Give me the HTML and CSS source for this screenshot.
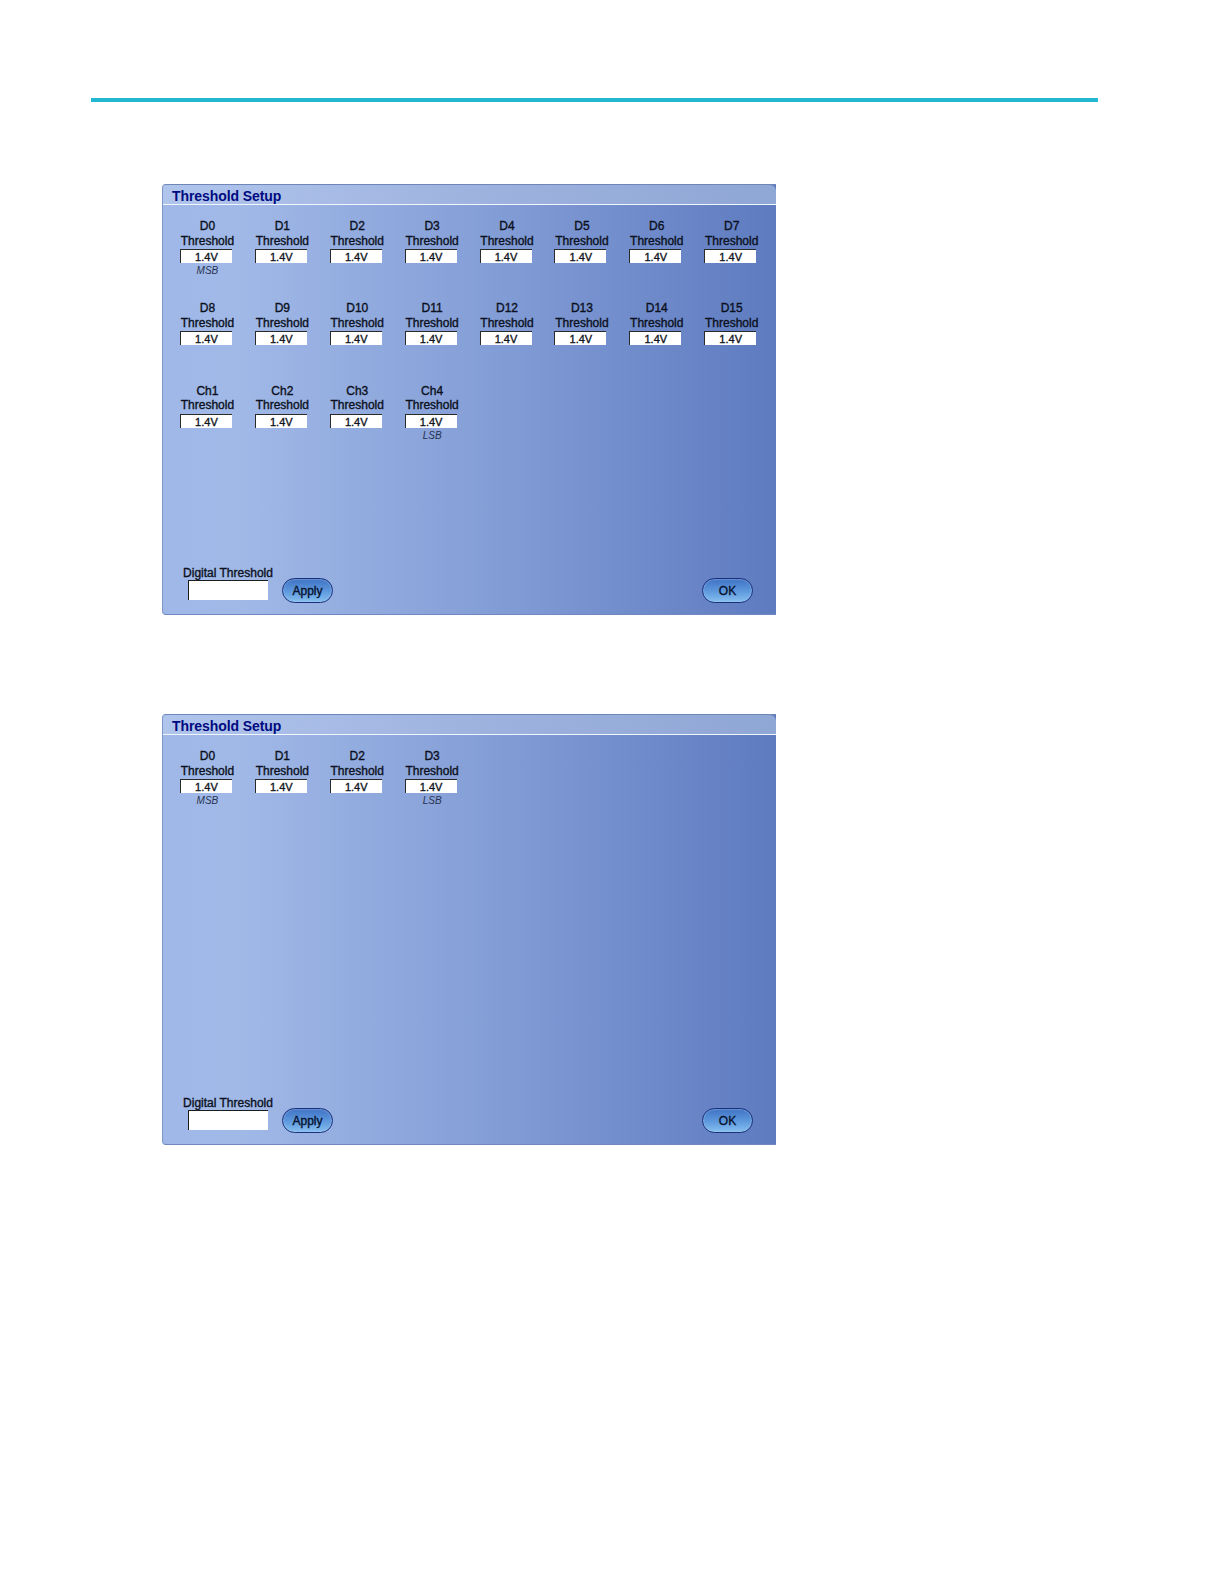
FILE: index.html
```html
<!DOCTYPE html>
<html lang="en">
<head>
<meta charset="utf-8">
<title>Threshold Setup</title>
<link rel="stylesheet" href="styles.css">
</head>
<body>
<div class="rule"></div>
<main class="stack">
  <section class="panel">
    <h2 class="title">Threshold Setup</h2>
    <div class="grid">
      <div class="cell"><span class="name">D0</span><span class="name">Threshold</span><span class="box">1.4V</span><span class="note">MSB</span></div>
      <div class="cell"><span class="name">D1</span><span class="name">Threshold</span><span class="box">1.4V</span></div>
      <div class="cell"><span class="name">D2</span><span class="name">Threshold</span><span class="box">1.4V</span></div>
      <div class="cell"><span class="name">D3</span><span class="name">Threshold</span><span class="box">1.4V</span></div>
      <div class="cell"><span class="name">D4</span><span class="name">Threshold</span><span class="box">1.4V</span></div>
      <div class="cell"><span class="name">D5</span><span class="name">Threshold</span><span class="box">1.4V</span></div>
      <div class="cell"><span class="name">D6</span><span class="name">Threshold</span><span class="box">1.4V</span></div>
      <div class="cell"><span class="name">D7</span><span class="name">Threshold</span><span class="box">1.4V</span></div>
      <div class="cell"><span class="name">D8</span><span class="name">Threshold</span><span class="box">1.4V</span></div>
      <div class="cell"><span class="name">D9</span><span class="name">Threshold</span><span class="box">1.4V</span></div>
      <div class="cell"><span class="name">D10</span><span class="name">Threshold</span><span class="box">1.4V</span></div>
      <div class="cell"><span class="name">D11</span><span class="name">Threshold</span><span class="box">1.4V</span></div>
      <div class="cell"><span class="name">D12</span><span class="name">Threshold</span><span class="box">1.4V</span></div>
      <div class="cell"><span class="name">D13</span><span class="name">Threshold</span><span class="box">1.4V</span></div>
      <div class="cell"><span class="name">D14</span><span class="name">Threshold</span><span class="box">1.4V</span></div>
      <div class="cell"><span class="name">D15</span><span class="name">Threshold</span><span class="box">1.4V</span></div>
      <div class="cell"><span class="name">Ch1</span><span class="name">Threshold</span><span class="box">1.4V</span></div>
      <div class="cell"><span class="name">Ch2</span><span class="name">Threshold</span><span class="box">1.4V</span></div>
      <div class="cell"><span class="name">Ch3</span><span class="name">Threshold</span><span class="box">1.4V</span></div>
      <div class="cell"><span class="name">Ch4</span><span class="name">Threshold</span><span class="box">1.4V</span><span class="note">LSB</span></div>
    </div>
    <div class="footer">
      <div class="digital"><span class="digital-label">Digital Threshold</span><span class="digital-box"></span></div>
      <span class="btn btn-apply">Apply</span>
      <span class="btn btn-ok">OK</span>
    </div>
  </section>
  <section class="panel">
    <h2 class="title">Threshold Setup</h2>
    <div class="grid">
      <div class="cell"><span class="name">D0</span><span class="name">Threshold</span><span class="box">1.4V</span><span class="note">MSB</span></div>
      <div class="cell"><span class="name">D1</span><span class="name">Threshold</span><span class="box">1.4V</span></div>
      <div class="cell"><span class="name">D2</span><span class="name">Threshold</span><span class="box">1.4V</span></div>
      <div class="cell"><span class="name">D3</span><span class="name">Threshold</span><span class="box">1.4V</span><span class="note">LSB</span></div>
    </div>
    <div class="footer">
      <div class="digital"><span class="digital-label">Digital Threshold</span><span class="digital-box"></span></div>
      <span class="btn btn-apply">Apply</span>
      <span class="btn btn-ok">OK</span>
    </div>
  </section>
</main>
</body>
</html>
```
FILE: styles.css
```css
* { box-sizing: border-box; }
html, body { margin: 0; padding: 0; background: #fff; }
body { width: 1224px; height: 1584px; font-family: "Liberation Sans", Arial, sans-serif; overflow: hidden; }

.rule { margin: 98px 0 0 91px; width: 1007px; height: 4px; background: #22b8d4; }

.stack { display: flex; flex-direction: column; gap: 99px; padding: 82px 0 0 162px; }

.panel {
  width: 614px;
  height: 431px;
  display: flex;
  flex-direction: column;
  background: linear-gradient(90deg, #9fb8e8 0%, #a1b9e7 12%, #86a0d8 50%, #5e7bc0 100%);
  border-top: 1px solid #6f86b8;
  border-left: 1px solid #7f97c8;
  border-bottom: 1px solid #6f88c0;
  border-radius: 4px 0 0 4px;
}

.title {
  margin: 0;
  height: 20px;
  padding: 2px 0 0 9px;
  font-size: 14px;
  line-height: 19px;
  font-weight: 700;
  letter-spacing: -0.08px;
  color: #000a80;
  background: linear-gradient(90deg, #b0c5ec 0%, #9db1de 55%, #8fa7d5 100%);
  border-bottom: 1px solid #f2f5fc;
  border-radius: 4px 6px 0 0;
}

.grid {
  display: grid;
  grid-template-columns: repeat(8, 74.9px);
  grid-auto-rows: 82.3px;
  padding: 14px 0 0 7px;
}

.cell { display: flex; flex-direction: column; align-items: center; }

.name { font-size: 12px; line-height: 14.5px; color: #0b1020; -webkit-text-stroke: 0.35px #0b1020; white-space: nowrap; }

.box {
  width: 52px;
  height: 14px;
  margin: 1px 3px 0 0;
  background: #fff;
  border-style: solid;
  border-width: 1px 0 0 1px;
  border-color: #2a2a2a;
  font-size: 11px;
  line-height: 14px;
  -webkit-text-stroke: 0.35px #10131c;
  text-align: center;
  color: #10131c;
}

.note { margin-top: 2px; font-size: 10px; line-height: 12px; font-style: italic; color: #26324f; }

.footer { margin-top: auto; height: 48px; display: flex; align-items: flex-start; padding-left: 20px; }

.digital { display: flex; flex-direction: column; align-items: center; width: 90px; }
.digital-label { font-size: 12px; line-height: 14px; color: #0b1020; -webkit-text-stroke: 0.35px #0b1020; white-space: nowrap; }
.digital-box {
  width: 80px;
  height: 20px;
  background: #fff;
  border-style: solid;
  border-width: 1px 0 0 1px;
  border-color: #1c1c1c;
}

.btn {
  width: 51px;
  height: 25px;
  margin-top: 12px;
  border-radius: 13px;
  border: 1.5px solid #1b2f7a;
  background: linear-gradient(180deg, #3f72c4 0%, #5f9ade 55%, #86bfee 100%);
  box-shadow: inset 0 0 2px #b7d6f5;
  color: #06122e;
  -webkit-text-stroke: 0.35px #06122e;
  font-size: 12px;
  line-height: 24px;
  text-align: center;
}
.btn-apply { margin-left: 9px; }
.btn-ok { margin-left: 369px; }
```
